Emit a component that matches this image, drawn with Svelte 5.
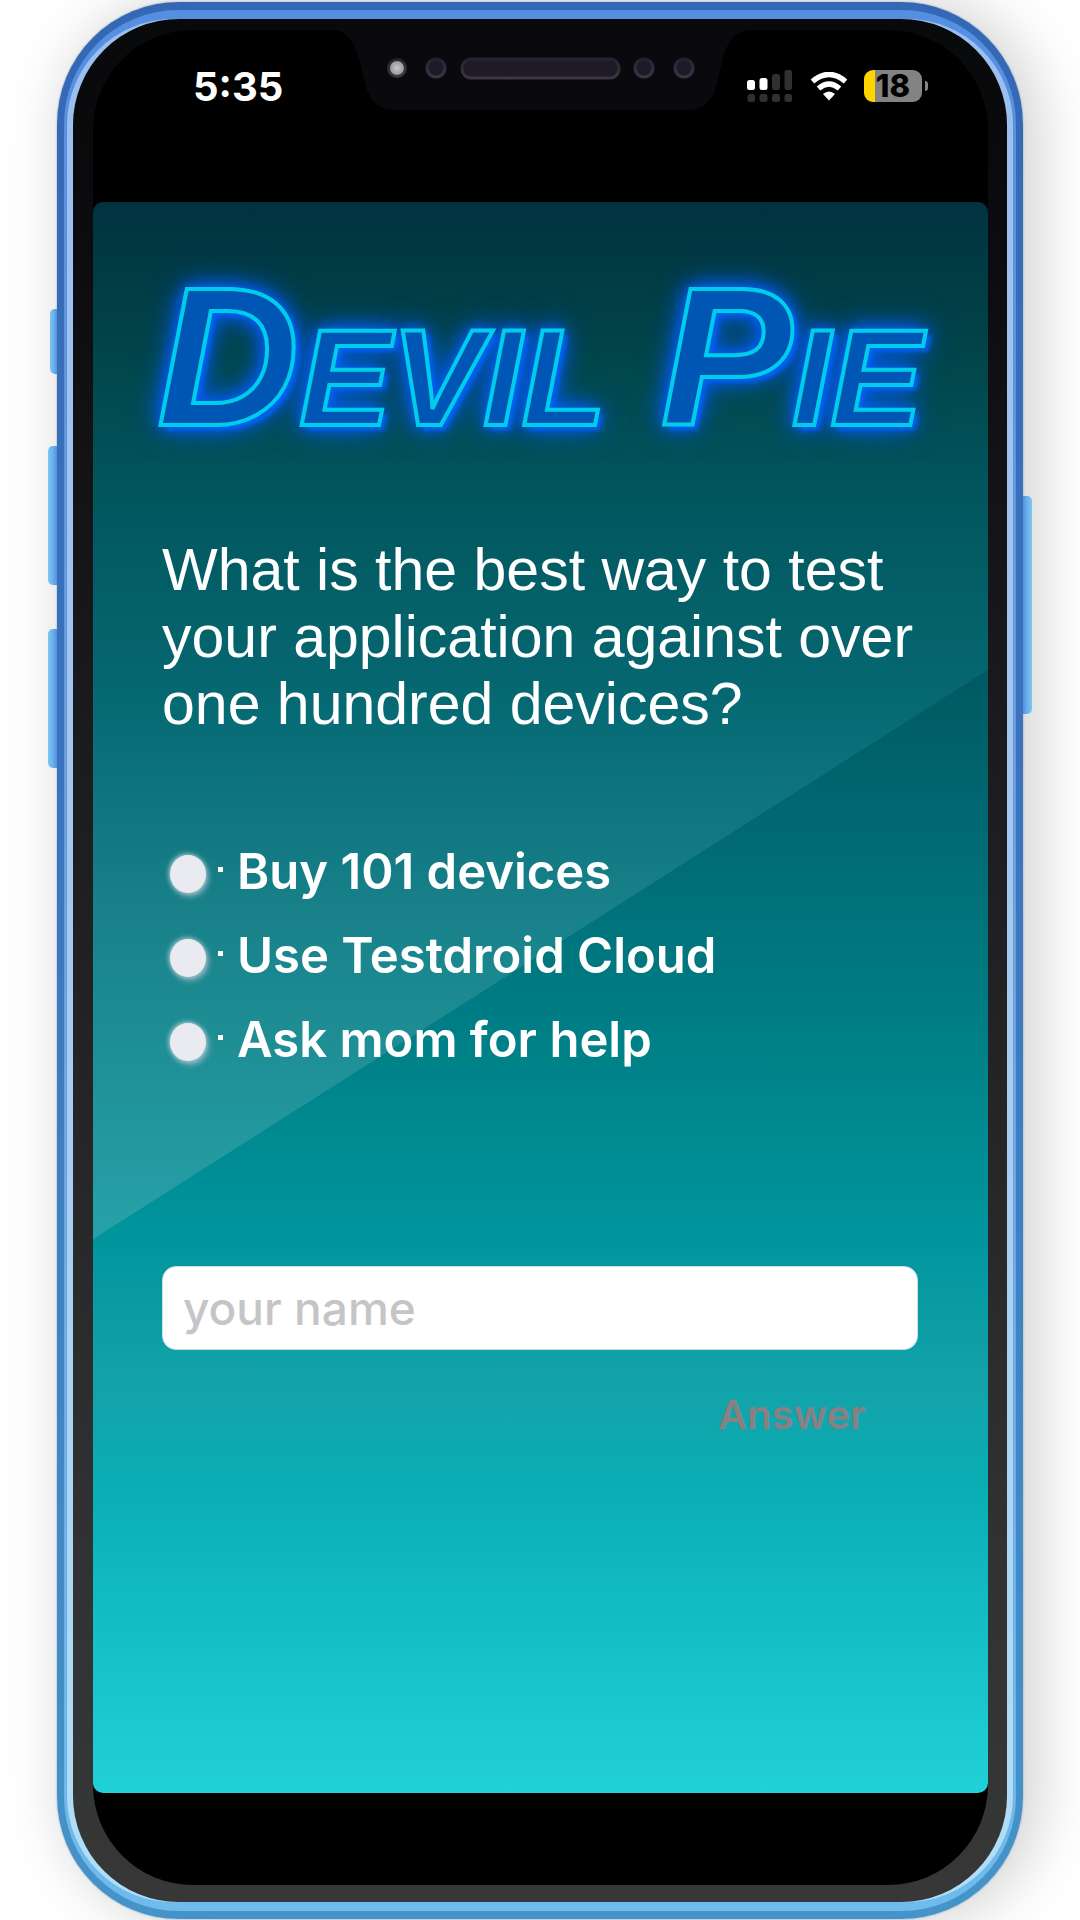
<script>
  const options = ['Buy 101 devices', 'Use Testdroid Cloud', 'Ask mom for help'];
  let choice = $state('');
  let name = $state('');
</script>

<main class="stage">
  <div class="phone">
    <span class="key key-mute"></span>
    <span class="key key-up"></span>
    <span class="key key-down"></span>
    <span class="key key-power"></span>
    <div class="rim">
      <div class="shine">
        <div class="bezel">
          <div class="screen">
            <header class="status">
              <time class="clock">5:35</time>
              <svg class="notch" width="400" height="80" viewBox="0 0 400 80" aria-hidden="true">
                <defs>
                  <linearGradient id="ring" x1="0" y1="0" x2="0" y2="1">
                    <stop offset="0" stop-color="#28222f" />
                    <stop offset="1" stop-color="#3a3741" />
                  </linearGradient>
                  <radialGradient id="lens">
                    <stop offset="0" stop-color="#c9c9c9" />
                    <stop offset="1" stop-color="#979797" />
                  </radialGradient>
                </defs>
                <path d="M-14 -1C4 -1 13 10 18 28C24 50 24 80 54 80H346C376 80 376 50 382 28C387 10 396 -1 414 -1Z" fill="#0a0a0e" />
                <circle cx="56" cy="38" r="10" fill="url(#ring)" />
                <circle cx="56" cy="38" r="7" fill="url(#lens)" />
                <circle cx="95" cy="38" r="9" fill="#1e1a28" stroke="url(#ring)" stroke-width="3" />
                <rect x="121" y="29" width="157" height="19" rx="9" fill="#1e1a28" stroke="url(#ring)" stroke-width="3" />
                <circle cx="303" cy="38" r="9" fill="#1e1a28" stroke="url(#ring)" stroke-width="3" />
                <circle cx="343" cy="38" r="9" fill="#1e1a28" stroke="url(#ring)" stroke-width="3" />
              </svg>
              <div class="indicators">
                <svg width="46" height="32" viewBox="0 0 46 32" aria-hidden="true">
                  <g fill="#fff">
                    <rect x="0" y="10" width="8" height="10" rx="2.5" />
                    <rect x="12.500" y="8" width="8" height="12" rx="2.500" />
                  </g>
                  <g fill="#303030">
                    <rect x="25" y="4" width="8" height="16" rx="2.5" />
                    <rect x="37.500" y="0" width="7.500" height="20" rx="2.500" />
                    <rect x="0.500" y="24" width="7.500" height="8" rx="2.500" />
                    <rect x="12.500" y="24" width="8" height="8" rx="2.500" />
                    <rect x="25" y="24" width="8" height="8" rx="2.500" />
                    <rect x="37.500" y="24" width="7.500" height="8" rx="2.500" />
                  </g>
                </svg>
                <svg class="wifi" width="38" height="29" viewBox="0 0 38 29" aria-hidden="true">
                  <path d="M2.500 9.500Q19 -4.500 35.500 9.500" fill="none" stroke="#fff" stroke-width="5.500" />
                  <path d="M8.500 16.500Q19 7.500 29.500 16.500" fill="none" stroke="#fff" stroke-width="5.500" />
                  <path d="M13 22Q19 17 25 22L19 28.500Z" fill="#fff" />
                </svg>
                <div class="battery"><span>18</span></div>
                <span class="nub"></span>
              </div>
            </header>

            <form class="app" onsubmit={(e) => e.preventDefault()}>
              <h1>Devil Pie</h1>
              <p id="question">What is the best way to test your application against over one hundred devices?</p>
              <fieldset aria-labelledby="question">
                {#each options as option}
                  <label>
                    <input type="radio" name="answer" value={option} bind:group={choice} />
                    <i></i>
                    {option}
                  </label>
                {/each}
              </fieldset>
              <input class="name" type="text" placeholder="your name" aria-label="your name" bind:value={name} />
              <button type="submit">Answer</button>
            </form>
          </div>
        </div>
      </div>
    </div>
  </div>
</main>

<style>
  :global(body) {
    background: #fff;
  }
  * {
    box-sizing: border-box;
  }
  .stage {
    padding: 2px 57px;
    overflow: hidden;
    font-family: Inter, 'Liberation Sans', sans-serif;
  }
  .phone {
    position: relative;
    padding: 8px 7px;
    border-radius: 122px;
    background: linear-gradient(#3468b5, #3b73be 40%, #4594c9);
    box-shadow: 0 0 2px #8a9bb0, 12px 0 64px rgba(0, 0, 0, 0.2);
  }
  .key {
    position: absolute;
    right: 100%;
    width: 9px;
    height: 139px;
    border-radius: 5px 0 0 5px;
    background: linear-gradient(90deg, #7cc6ee, #6cb2ec 50%, #5590e0);
  }
  .key-mute {
    top: 307px;
    width: 7px;
    height: 65px;
  }
  .key-up {
    top: 444px;
  }
  .key-down {
    top: 627px;
  }
  .key-power {
    top: 494px;
    right: auto;
    left: 100%;
    height: 218px;
    border-radius: 0 5px 5px 0;
    background: linear-gradient(270deg, #7cc6ee, #6cb2ec 50%, #5590e0);
  }
  .rim {
    padding: 9px 3px;
    border-radius: 114px;
    background: linear-gradient(#548fe1, #6b9bd8 40%, #6fbbec);
  }
  .shine {
    padding: 0 6px;
    border-radius: 106px;
    background: linear-gradient(#9abff0, #a2c6f0 40%, #b1def7);
  }
  .bezel {
    padding: 11px 19px 17px 20px;
    border-radius: 106px;
    background: linear-gradient(#08090b, #0c0b0f 12%, #1b1a1c 38%, #303133 80%, #363736);
  }
  .screen {
    padding-bottom: 92px;
    border-radius: 100px;
    background: #000;
  }
  .status {
    display: grid;
    grid-template-columns: 1fr 400px 1fr;
    align-items: start;
    height: 172px;
    color: #fff;
  }
  .clock {
    padding: 34px 0 0 100px;
    font-size: 40px;
    font-weight: 700;
    line-height: 46px;
    white-space: nowrap;
  }
  .notch {
    overflow: visible;
  }
  .indicators {
    display: flex;
    justify-content: flex-end;
    align-items: center;
    padding: 40px 60px 0 0;
  }
  .wifi {
    margin: 0 16px 0 17px;
  }
  .battery {
    display: flex;
    justify-content: center;
    width: 58px;
    height: 32px;
    border-radius: 9px;
    background: linear-gradient(90deg, #ffd500 11px, #838383 11px);
    color: #000;
    font-size: 31px;
    font-weight: 800;
    line-height: 32px;
  }
  .nub {
    width: 3px;
    height: 10px;
    margin-left: 3px;
    border-radius: 0 3px 3px 0;
    background: #838383;
  }
  .app {
    position: relative;
    display: flex;
    flex-direction: column;
    align-items: stretch;
    padding: 57px 70px 354px 69px;
    border-radius: 10px;
    background: linear-gradient(#01323f, #01464b 10%, #01535b 17%, #005a63 30%, #016a74 40%, #008087 53%, #00959d 65%, #13a2a9 74%, #0aaeb5 81%, #21d1d8);
    overflow: hidden;
  }
  .app::before {
    content: '';
    position: absolute;
    inset: 0;
    background: linear-gradient(rgba(0, 160, 170, 0) 16%, rgba(30, 160, 170, 0.2) 32%, rgba(120, 190, 195, 0.2) 45%, rgba(150, 195, 200, 0.26) 65%);
    clip-path: polygon(0 0, 100% 0, 100% 29.4%, 0 65.2%);
  }
  .app > * {
    position: relative;
  }
  h1 {
    margin: 0 0 82px -5px;
    color: #0056b4;
    font-family: 'Liberation Sans', Arial, sans-serif;
    font-size: 197px;
    font-style: italic;
    font-variant: small-caps;
    font-weight: 700;
    line-height: 196px;
    white-space: nowrap;
    -webkit-text-stroke: 4px #00cdea;
    text-shadow: 5px 5px 4px #0062f0, 0 0 8px #005ce8, 0 0 16px #005ce8, 0 0 24px #005ce8, 0 0 32px #0058d8;
  }
  p {
    margin: 0 0 91px;
    color: #fff;
    font-family: 'Liberation Sans', Arial, sans-serif;
    font-size: 59px;
    line-height: 67px;
  }
  fieldset {
    display: flex;
    flex-direction: column;
    margin: 0 0 185px;
    padding: 0;
    border: 0;
  }
  label {
    display: flex;
    align-items: center;
    height: 84px;
    padding-left: 8px;
    color: #fff;
    font-size: 49px;
    font-weight: 600;
    white-space: nowrap;
  }
  input[type='radio'] {
    appearance: none;
    width: 36px;
    height: 38px;
    margin: 5px 12px 0 0;
    border-radius: 50%;
    background: #eaebf1;
    box-shadow: -1px -1px 5px rgba(225, 235, 240, 0.7), 2px 3px 6px rgba(190, 200, 215, 0.8);
  }
  input[type='radio']:checked {
    background: radial-gradient(#00646c 35%, #eaebf1 40%);
  }
  i {
    width: 5px;
    height: 5px;
    margin: 0 14px 4px 0;
    background: #fff;
  }
  .name {
    width: 100%;
    height: 84px;
    padding: 0 20px;
    border: 1px solid #c9dfe1;
    border-radius: 14px;
    background: #fff;
    color: #222;
    font: 500 46px Inter, 'Liberation Sans', sans-serif;
  }
  .name::placeholder {
    color: #c5c5c7;
    opacity: 1;
  }
  button {
    align-self: flex-end;
    margin: 41px 52px 0 0;
    padding: 0;
    border: 0;
    background: none;
    color: #8a8082;
    font: 600 40px/48px Inter, 'Liberation Sans', sans-serif;
  }
</style>
